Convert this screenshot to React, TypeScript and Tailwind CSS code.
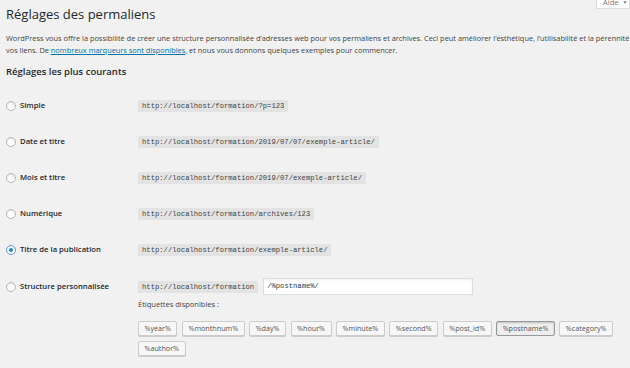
import React from "react";

const rows = [
  { label: "Simple", url: "http://localhost/formation/?p=123" },
  { label: "Date et titre", url: "http://localhost/formation/2019/07/07/exemple-article/" },
  { label: "Mois et titre", url: "http://localhost/formation/2019/07/exemple-article/" },
  { label: "Numérique", url: "http://localhost/formation/archives/123" },
  { label: "Titre de la publication", url: "http://localhost/formation/exemple-article/", checked: true },
];

const tags = [
  "%year%",
  "%monthnum%",
  "%day%",
  "%hour%",
  "%minute%",
  "%second%",
  "%post_id%",
  "%postname%",
  "%category%",
  "%author%",
];

function Radio({ checked }: { checked?: boolean }) {
  return (
    <span
      className={
        "flex items-center justify-center w-[10px] h-[10px] rounded-full bg-white border shadow-[inset_0_1px_2px_rgba(0,0,0,0.1)] " +
        (checked ? "border-[#5b9dd9]" : "border-[#b4b9be]")
      }
    >
      {checked && <span className="block w-[4px] h-[4px] rounded-full bg-[#1e8cbe]" />}
    </span>
  );
}

function Code({ children }: { children: React.ReactNode }) {
  return (
    <span className="inline-block bg-[#e3e3e3] text-[#444] px-[4px] leading-[12px] h-[12px] text-[7.2px] font-['Liberation_Mono',monospace]">
      {children}
    </span>
  );
}

export default function App() {
  return (
    <div className="relative w-[630px] h-[368px] overflow-hidden bg-[#f1f1f1] text-[#444] font-['Open_Sans',sans-serif] pl-[6px]">
      <div className="absolute top-0 right-0 w-[34px] h-[9px] overflow-hidden bg-white border-x border-b border-[#ddd]">
        <div className="flex items-center gap-[4px] pl-[6px] -mt-[3px] text-[7.5px] leading-[10px] text-[#72777c]">
          <span>Aide</span>
          <span className="text-[5px]">▼</span>
        </div>
      </div>

      <h1 className="h-[30px] flex items-center text-[13px] text-[#23282d] font-normal">
        Réglages des permaliens
      </h1>

      <p className="mt-[2px] text-[7.4px] leading-[12px] whitespace-nowrap">
        WordPress vous offre la possibilité de créer une structure personnalisée d’adresses web pour vos permaliens et
        archives. Ceci peut améliorer l’esthétique, l’utilisabilité et la pérennité
        <br />
        vos liens. De{" "}
        <a className="text-[#0073aa] underline" href="#">
          nombreux marqueurs sont disponibles
        </a>
        , et nous vous donnons quelques exemples pour commencer.
      </p>

      <h2 className="mt-[8px] h-[16px] flex items-center text-[9.5px] font-semibold text-[#23282d]">
        Réglages les plus courants
      </h2>

      <div className="mt-[8px] flex flex-col">
        {rows.map((r) => (
          <div key={r.label} className="h-[36px] flex items-center">
            <div className="w-[132px] flex items-center gap-[4px]">
              <Radio checked={r.checked} />
              <span className="text-[7.7px] font-semibold text-[#23282d]">{r.label}</span>
            </div>
            <Code>{r.url}</Code>
          </div>
        ))}

        <div className="pt-[10px] flex items-start">
          <div className="w-[132px] h-[17px] flex items-center gap-[4px]">
            <Radio />
            <span className="text-[7.7px] font-semibold text-[#23282d]">Structure personnalisée</span>
          </div>
          <div className="flex flex-col">
            <div className="flex items-center gap-[5px]">
              <Code>http://localhost/formation</Code>
              <div className="w-[210px] h-[17px] bg-white border border-[#ddd] shadow-[inset_0_1px_2px_rgba(0,0,0,0.07)] flex items-center pl-[3px] text-[7.2px] text-[#32373c] font-['Liberation_Mono',monospace]">
                /%postname%/
              </div>
            </div>
            <div className="mt-[4px] h-[12px] flex items-center text-[7.5px]">Étiquettes disponibles :</div>
            <div className="mt-[10px] flex flex-wrap gap-x-[4.5px] gap-y-[5px] w-[485px]">
              {tags.map((t) => (
                <span
                  key={t}
                  className={
                    "h-[15px] flex items-center px-[5.5px] rounded-[2px] border text-[7.2px] text-[#555] " +
                    (t === "%postname%"
                      ? "bg-[#eee] border-[#999] shadow-[inset_0_1px_2px_rgba(0,0,0,0.2)]"
                      : "bg-[#f7f7f7] border-[#ccc] shadow-[0_1px_0_#ccc]")
                  }
                >
                  {t}
                </span>
              ))}
            </div>
          </div>
        </div>
      </div>
    </div>
  );
}
